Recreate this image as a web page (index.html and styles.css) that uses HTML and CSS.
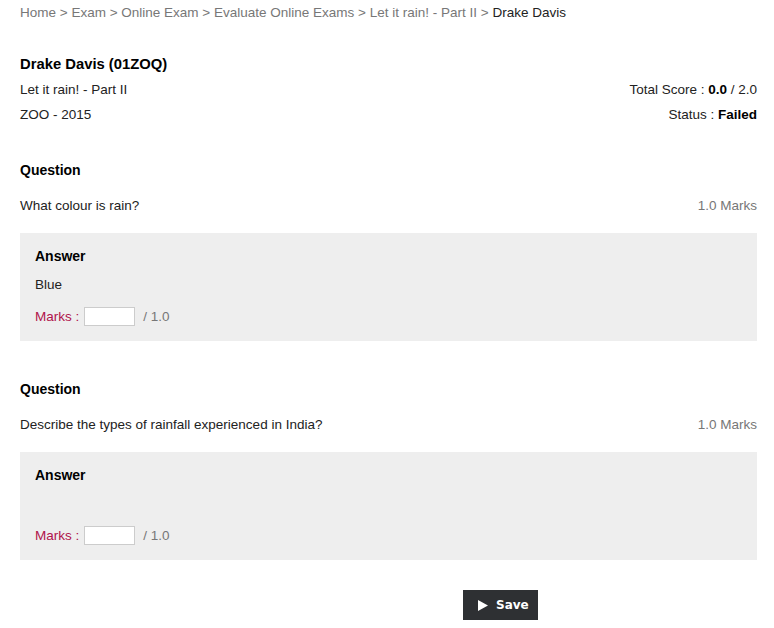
FILE: index.html
```html
<!DOCTYPE html>
<html lang="en">
<head>
    <meta charset="UTF-8">
    <title>Evaluate Online Exams - Drake Davis</title>
    <link rel="stylesheet" href="styles.css">
</head>
<body>
    <div class="breadcrumb">
        <a href="#">Home</a> &gt; <a href="#">Exam</a> &gt; <a href="#">Online Exam</a> &gt;
        <a href="#">Evaluate Online Exams</a> &gt; <a href="#">Let it rain! - Part II</a> &gt;
        <span class="current">Drake Davis</span>
    </div>

    <div class="summary">
        <div class="student">Drake Davis (01ZOQ)</div>
        <div class="row">
            <span>Let it rain! - Part II</span>
            <span>Total Score : <b>0.0</b> / 2.0</span>
        </div>
        <div class="row">
            <span>ZOO - 2015</span>
            <span>Status : <b>Failed</b></span>
        </div>
    </div>

    <form class="evaluate">
        <div class="question">
            <h3>Question</h3>
            <div class="row">
                <span>What colour is rain?</span>
                <span class="marks-total">1.0 Marks</span>
            </div>
            <div class="answer">
                <h4>Answer</h4>
                <div class="answer-text">Blue</div>
                <div class="marks">
                    <label>Marks :</label>
                    <input type="text">
                    <span class="out-of">/ 1.0</span>
                </div>
            </div>
        </div>

        <div class="question">
            <h3>Question</h3>
            <div class="row">
                <span>Describe the types of rainfall experienced in India?</span>
                <span class="marks-total">1.0 Marks</span>
            </div>
            <div class="answer">
                <h4>Answer</h4>
                <div class="answer-text"></div>
                <div class="marks">
                    <label>Marks :</label>
                    <input type="text">
                    <span class="out-of">/ 1.0</span>
                </div>
            </div>
        </div>

        <div class="actions">
            <button type="button" class="save">
                <svg width="10" height="11" viewBox="0 0 10 11"><path fill="#fff" d="M0 0L10 5.5L0 11z"/></svg>
                Save
            </button>
        </div>
    </form>
</body>
</html>
```

FILE: styles.css
```css
body {
    margin: 0;
    padding: 0 17px 0 20px;
    font-family: 'Liberation Sans', Arial, sans-serif;
    font-size: 13.5px;
    color: #222;
    background: #fff;
}
.breadcrumb {
    line-height: 26px;
    color: #777;
}
.breadcrumb a {
    color: #777;
    text-decoration: none;
}
.breadcrumb .current {
    color: #222;
}
.summary {
    margin-top: 26px;
}
.student {
    font-size: 14.8px;
    font-weight: bold;
    line-height: 25px;
    color: #000;
}
.row {
    display: flex;
    justify-content: space-between;
    line-height: 25px;
}
.row b {
    color: #000;
}
.question h3 {
    margin: 33px 0 0;
    font-size: 14px;
    line-height: 20px;
    color: #000;
}
.question + .question h3 {
    margin-top: 38px;
}
.question .row {
    margin-top: 16px;
    line-height: 20px;
}
.marks-total {
    color: #777;
}
.answer {
    margin-top: 17px;
    background: #eee;
    padding: 13px 15px 15px;
}
.answer h4 {
    margin: 0;
    font-size: 14px;
    line-height: 20px;
    color: #000;
}
.answer-text {
    margin-top: 9px;
    height: 20px;
    line-height: 20px;
}
.marks {
    margin-top: 11px;
    display: flex;
    align-items: center;
    height: 20px;
}
.marks label {
    color: #b0134b;
}
.marks input {
    box-sizing: border-box;
    width: 51px;
    height: 19px;
    margin: 1px 0 0 5px;
    padding: 0 3px;
    border: 1px solid #ccc;
    background: #fff;
    font: inherit;
}
.out-of {
    margin-left: 8px;
    color: #777;
}
.actions {
    margin-top: 30px;
    padding-left: 443px;
}
.save {
    display: flex;
    align-items: center;
    gap: 8px;
    width: 75px;
    height: 30px;
    padding: 0 0 0 15px;
    border: none;
    background: #2e3033;
    color: #fff;
    font-family: 'DejaVu Sans', Verdana, sans-serif;
    font-size: 12px;
    font-weight: bold;
    cursor: pointer;
}
```
